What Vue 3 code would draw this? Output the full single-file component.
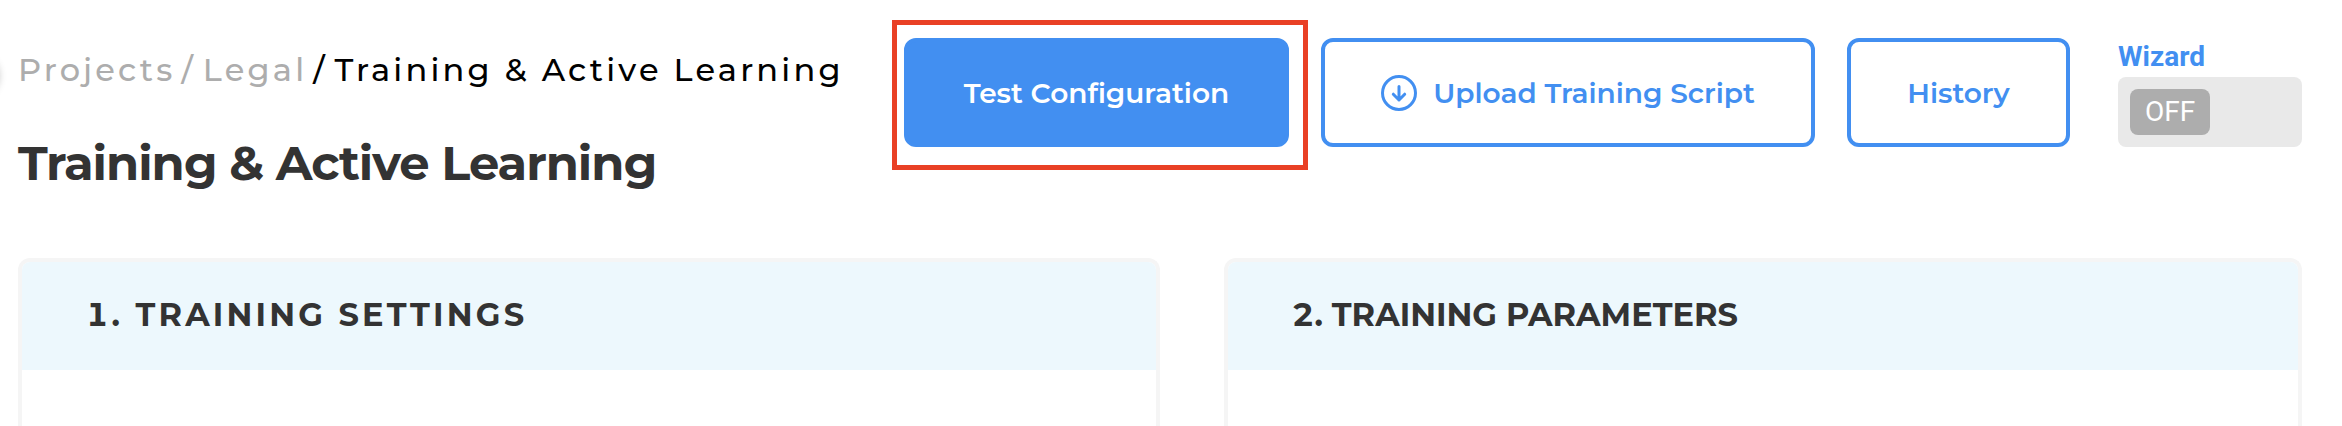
<script setup>
import { ref } from 'vue'

const wizardOn = ref(false)
const cards = [
  { id: 'settings', title: '1. TRAINING SETTINGS', spaced: true },
  { id: 'parameters', title: '2. TRAINING PARAMETERS', spaced: false },
]
</script>

<template>
  <div class="page">
    <button class="drawer-handle" type="button" aria-label="Open menu"></button>
    <header class="header">
      <div class="heading">
        <nav class="breadcrumb" aria-label="Breadcrumb">
          <a href="#projects">Projects</a>
          <span class="slash muted">/</span>
          <a href="#legal">Legal</a>
          <span class="slash">/</span>
          <span aria-current="page">Training &amp; Active Learning</span>
        </nav>
        <h1 class="title">Training &amp; Active Learning</h1>
      </div>

      <div class="actions">
        <div class="highlighted">
          <button class="btn btn-primary" type="button">Test Configuration</button>
        </div>
        <button class="btn btn-upload" type="button">
          <svg class="icon" viewBox="0 0 36 36" fill="none" aria-hidden="true">
            <circle cx="18" cy="18" r="16.5" stroke="currentColor" stroke-width="3" />
            <path d="M18 11.5V25M12.3 19.2L18 25l5.7-5.8" stroke="currentColor" stroke-width="3" stroke-linecap="round" stroke-linejoin="round" />
          </svg>
          Upload Training Script
        </button>
        <button class="btn btn-history" type="button">History</button>
        <div class="wizard">
          <label class="wizard-label" for="wizard-switch">Wizard</label>
          <button
            id="wizard-switch"
            class="switch"
            :class="{ on: wizardOn }"
            type="button"
            role="switch"
            :aria-checked="wizardOn"
            @click="wizardOn = !wizardOn"
          >
            <span class="thumb">{{ wizardOn ? 'ON' : 'OFF' }}</span>
          </button>
        </div>
      </div>
    </header>

    <main class="cards">
      <section v-for="card in cards" :key="card.id" class="card">
        <h2 class="card-title" :class="{ spaced: card.spaced }">{{ card.title }}</h2>
      </section>
    </main>
  </div>
</template>

<style>
body {
  margin: 0;
  background: #fff;
}
</style>

<style scoped>
.page {
  position: relative;
  display: flex;
  flex-direction: column;
  box-sizing: border-box;
  min-height: 100vh;
  padding: 38px 40px 0 18px;
  overflow: hidden;
  font-family: Montserrat, Inter, "Liberation Sans", sans-serif;
  color: #333;
}
.drawer-handle {
  position: absolute;
  top: 56px;
  left: -42px;
  width: 40px;
  height: 40px;
  padding: 0;
  border: 0;
  border-radius: 50%;
  background: #fff;
  box-shadow: 0 0 8px rgba(0, 0, 0, 0.3);
}
.header {
  display: flex;
  justify-content: space-between;
  align-items: flex-start;
}
.heading {
  padding-top: 12px;
  white-space: nowrap;
}
.breadcrumb {
  display: flex;
  font-size: 32px;
  font-weight: 500;
  line-height: 40px;
  letter-spacing: 0.1em;
  color: #000;
}
.breadcrumb a,
.muted {
  color: #adadad;
  text-decoration: none;
}
.slash {
  padding: 0 10px 0 6px;
  letter-spacing: 0;
}
.title {
  margin: 45px 0 0;
  font-size: 48px;
  font-weight: 700;
  line-height: 56px;
  letter-spacing: -1px;
}
.actions {
  display: flex;
  align-items: flex-end;
  gap: 32px;
}
.highlighted {
  position: relative;
}
.highlighted::after {
  content: "";
  position: absolute;
  inset: -18px -19px -23px -12px;
  border: 5px solid #e94025;
  pointer-events: none;
}
.btn {
  display: flex;
  align-items: center;
  justify-content: center;
  gap: 16px;
  box-sizing: border-box;
  height: 109px;
  padding: 0 40px;
  border: 4px solid #428ff1;
  border-radius: 12px;
  background: #fff;
  color: #428ff1;
  font: inherit;
  font-size: 28px;
  font-weight: 600;
  white-space: nowrap;
}
.btn-primary {
  min-width: 385px;
  background: #428ff1;
  color: #fff;
}
.btn-upload {
  min-width: 494px;
}
.btn-history {
  min-width: 223px;
}
.icon {
  width: 36px;
  height: 36px;
}
.wizard {
  display: flex;
  flex-direction: column;
  gap: 4px;
  width: 184px;
  margin-left: 16px;
  font-family: Roboto, sans-serif;
  font-size: 28px;
  line-height: 32px;
}
.wizard-label {
  color: #428ff1;
  font-weight: 700;
}
.switch {
  display: flex;
  align-items: center;
  height: 70px;
  padding: 12px;
  border: 0;
  border-radius: 8px;
  background: #e9e9e9;
  font: inherit;
}
.switch.on {
  justify-content: flex-end;
}
.thumb {
  width: 80px;
  border-radius: 8px;
  background: #adadad;
  color: #fff;
  line-height: 46px;
  text-align: center;
}
.switch.on .thumb {
  background: #428ff1;
}
.cards {
  display: grid;
  grid-template-columns: 1142fr 1078fr;
  gap: 64px;
  flex: 1;
  margin-top: 67px;
}
.card {
  border: 4px solid #f5f5f5;
  border-bottom: 0;
  border-radius: 12px 12px 0 0;
  overflow: hidden;
}
.card-title {
  margin: 0;
  padding: 31px 64px 33px;
  background: #edf8fd;
  font-size: 32px;
  font-weight: 700;
  line-height: 44px;
  font-variant-numeric: tabular-nums;
}
.card-title.spaced {
  letter-spacing: 0.1em;
}
</style>
